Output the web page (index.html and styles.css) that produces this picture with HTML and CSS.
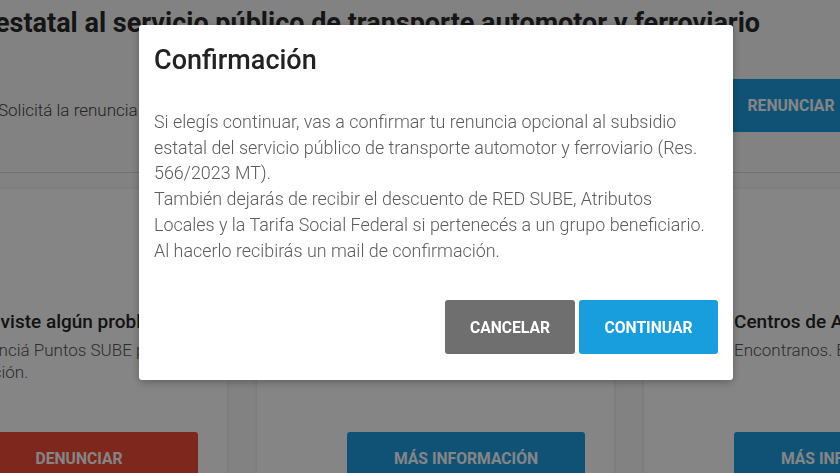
FILE: index.html
```html
<!DOCTYPE html>
<html lang="es">

<head>
    <meta charset="UTF-8">
    <meta name="viewport" content="width=device-width, initial-scale=1.0">
    <title>Renuncia al subsidio</title>

    <link rel="stylesheet" href="styles.css">
</head>

<body>

    <div class="pagina">
        <h1 class="titulo">estatal al servicio público de transporte automotor y ferroviario</h1>

        <div class="fila-renuncia">
            <p class="texto">Solicitá la renuncia al subsidio estatal del transporte público.</p>
            <a class="boton boton-azul boton-renunciar">RENUNCIAR</a>
        </div>

        <hr class="separador">

        <div class="tarjetas">
            <div class="tarjeta tarjeta-primera">
                <h3 class="tarjeta-titulo">¿Tuviste algún problema?</h3>
                <p class="tarjeta-texto">Denunciá Puntos SUBE por mala<br>atención.</p>
                <a class="boton boton-rojo">DENUNCIAR</a>
            </div>
            <div class="tarjeta">
                <h3 class="tarjeta-titulo">Tarifa Social Federal</h3>
                <p class="tarjeta-texto">Conocé quiénes pueden acceder<br>al beneficio.</p>
                <a class="boton boton-azul">MÁS INFORMACIÓN</a>
            </div>
            <div class="tarjeta">
                <h3 class="tarjeta-titulo">Centros de Atención</h3>
                <p class="tarjeta-texto">Encontranos. Estamos cerca tuyo.</p>
                <a class="boton boton-azul">MÁS INFORMACIÓN</a>
            </div>
        </div>
    </div>

    <!-- fondo oscuro del modal -->
    <div class="fondo"></div>

    <div class="modal">
        <h2 class="modal-titulo">Confirmación</h2>
        <p class="modal-texto">
            Si elegís continuar, vas a confirmar tu renuncia opcional al subsidio<br>
            estatal del servicio público de transporte automotor y ferroviario (Res.<br>
            566/2023 MT).<br>
            También dejarás de recibir el descuento de RED SUBE, Atributos<br>
            Locales y la Tarifa Social Federal si pertenecés a un grupo beneficiario.<br>
            Al hacerlo recibirás un mail de confirmación.
        </p>
        <div class="modal-botones">
            <button class="boton boton-gris">CANCELAR</button>
            <button class="boton boton-celeste">CONTINUAR</button>
        </div>
    </div>

</body>

</html>
```

FILE: styles.css
```css
body {
    margin: 0;
    background-color: #fafafa;
    font-family: Roboto, "Liberation Sans", sans-serif;
    overflow: hidden;
}

.pagina {
    width: 840px;
    height: 473px;
    overflow: hidden;
}

.titulo {
    margin: 0 0 0 -5px;
    padding-top: 7px;
    font-size: 27px;
    font-weight: 700;
    color: #2a2a2a;
    white-space: nowrap;
}

.fila-renuncia {
    display: flex;
    justify-content: space-between;
    align-items: center;
    margin-top: 40px;
    height: 53px;
}

.texto {
    margin: 8px 0 0 -2px;
    font-size: 17px;
    font-weight: 300;
    color: #444;
    white-space: nowrap;
}

.boton {
    display: flex;
    align-items: center;
    justify-content: center;
    box-sizing: border-box;
    border: none;
    border-radius: 3px;
    font-family: Roboto, "Liberation Sans", sans-serif;
    font-size: 15.7px;
    font-weight: 700;
    color: white;
}

.boton-renunciar {
    flex: 0 0 238px;
    height: 53px;
    margin-right: -70px;
    border-radius: 0;
}

.boton-azul {
    background-color: #1d9ee2;
}

.boton-rojo {
    background-color: #f24c38;
}

.separador {
    margin: 40px 0 0 0;
    border: none;
    border-top: 1px solid #d8d8d8;
}

.tarjetas {
    display: flex;
    gap: 30px;
    margin-left: -130px;
    margin-top: 16px;
}

.tarjeta {
    flex: 0 0 357px;
    min-width: 0;
    box-sizing: border-box;
    height: 320px;
    padding: 121px 30px 0 90px;
    background-color: white;
    box-shadow: 0 0 4px rgba(0, 0, 0, 0.12);
}

.tarjeta-titulo {
    margin: 0;
    font-size: 19px;
    font-weight: 500;
    color: #262626;
    white-space: nowrap;
}

.tarjeta-texto {
    margin: 6px 0 0 0;
    height: 57px;
    font-size: 17px;
    font-weight: 300;
    line-height: 22px;
    color: #555;
    white-space: nowrap;
}

.tarjeta-primera .tarjeta-titulo {
    margin-left: 10px;
}

.tarjeta .boton {
    width: 238px;
    height: 52px;
    margin-top: 36px;
}

.fondo {
    position: fixed;
    inset: 0;
    background-color: rgba(0, 0, 0, 0.48);
}

.modal {
    position: fixed;
    left: 139px;
    top: 25px;
    width: 594px;
    height: 355px;
    box-sizing: border-box;
    padding: 19px 15px 26px 15px;
    display: flex;
    flex-direction: column;
    background-color: white;
    border-radius: 3px;
    box-shadow: 0 2px 8px rgba(0, 0, 0, 0.3);
}

.modal-titulo {
    margin: 0;
    font-size: 27px;
    font-weight: 500;
    color: #222;
}

.modal-texto {
    margin: 33px 0 0 0;
    font-size: 17.9px;
    font-weight: 300;
    line-height: 25.7px;
    color: #5c5c5c;
    white-space: nowrap;
}

.modal-botones {
    display: flex;
    justify-content: flex-end;
    gap: 4px;
    margin-top: auto;
}

.modal-botones .boton {
    height: 54px;
    padding: 0;
}

.boton-gris {
    width: 130px;
    background-color: #6f6f6f;
}

.boton-celeste {
    width: 139px;
    background-color: #189ddd;
}
```
